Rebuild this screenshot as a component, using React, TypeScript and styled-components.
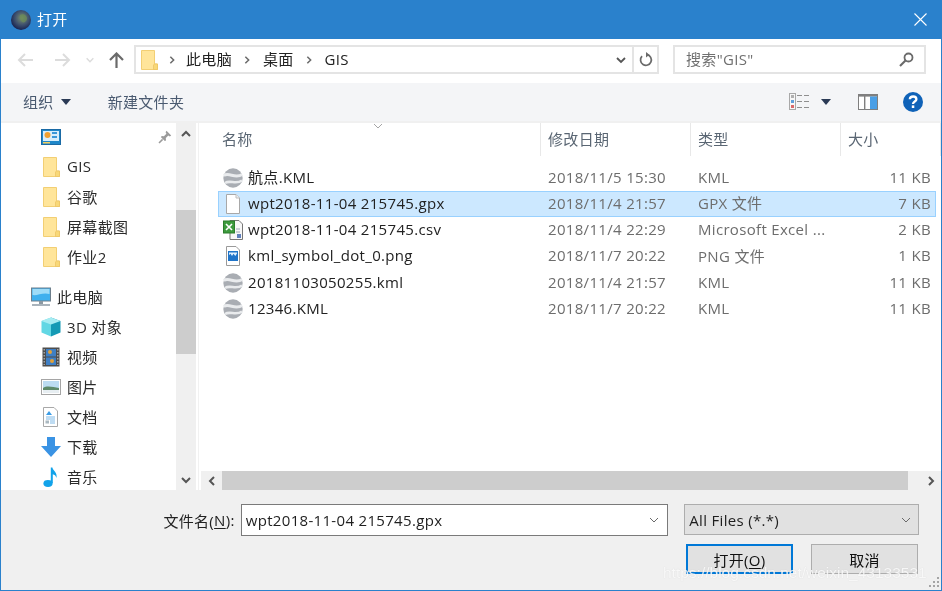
import { ReactNode } from "react";
import styled, { createGlobalStyle } from "styled-components";

const GlobalStyle = createGlobalStyle`
  html, body {
    margin: 0;
    padding: 0;
    width: 942px;
    height: 591px;
    overflow: hidden;
    background: #fff;
  }
  * { box-sizing: border-box; }
`;

const Dialog = styled.div`
  position: relative;
  width: 942px;
  height: 591px;
  display: flex;
  flex-direction: column;
  background: #fff;
  border: 1px solid #2a81cc;
  border-top: 0;
  font-family: "Open Sans", "Noto Sans CJK SC", sans-serif;
  font-size: 15px;
  letter-spacing: 0.32px;
  color: #1e1e1e;
  overflow: hidden;
  filter: blur(0.35px);
`;

const TitleBar = styled.div`
  height: 39px;
  flex: none;
  margin: 0 -1px;
  padding: 0 15px 0 11px;
  display: flex;
  align-items: center;
  background: #2a81cc;
  color: #fff;
`;

const TitleText = styled.span`
  margin: 0 0 2px 6px;
  flex: 1;
`;

const NavBar = styled.div`
  height: 44px;
  flex: none;
  padding: 6px 15px 9px 15px;
  display: flex;
  align-items: center;
`;

const NavButtons = styled.div`
  width: 118px;
  height: 100%;
  display: flex;
  align-items: center;
`;

const NavSlot = styled.span<{ $w: number }>`
  width: ${(p) => p.$w}px;
  display: flex;
  justify-content: center;
`;

const AddressBox = styled.div`
  width: 525px;
  height: 29px;
  display: flex;
  align-items: center;
  border: 2px solid #e4e4e4;
  padding-left: 4px;
`;

const Crumb = styled.span`
  color: #222;
  white-space: nowrap;
  margin-bottom: 2px;
`;

const CrumbSep = styled.span<{ $w?: number }>`
  width: ${(p) => p.$w ?? 31}px;
  display: flex;
  justify-content: center;
`;

const AddressEnd = styled.div`
  margin-left: auto;
  display: flex;
  align-items: center;
  height: 100%;
`;

const RefreshSlot = styled.span`
  width: 25px;
  height: 100%;
  margin-left: 5px;
  border-left: 2px solid #e4e4e4;
  display: flex;
  align-items: center;
  justify-content: center;
`;

const SearchBox = styled.div`
  width: 253px;
  height: 29px;
  margin-left: 14px;
  padding: 0 10px 0 11px;
  display: flex;
  align-items: center;
  justify-content: space-between;
  border: 2px solid #e4e4e4;
  color: #707070;
`;

const SearchHint = styled.span`
  margin-bottom: 2px;
`;

const ToolBar = styled.div`
  height: 40px;
  flex: none;
  padding: 0 18px 1px 22px;
  display: flex;
  align-items: center;
  background: #f4f5f7;
  border-bottom: 2px solid #f0f0f0;
  color: #4a5a70;
`;

const ToolButton = styled.span<{ $gap?: number; $mr?: number }>`
  display: flex;
  align-items: center;
  gap: ${(p) => p.$gap ?? 0}px;
  margin-right: ${(p) => p.$mr ?? 0}px;
`;

const ToolRight = styled.div`
  margin-left: auto;
  display: flex;
  align-items: center;
`;

const Main = styled.div`
  flex: 1;
  min-height: 0;
  display: flex;
`;

const Sidebar = styled.div`
  width: 175px;
  flex: none;
  margin-top: -1px;
  overflow: hidden;
`;

const NavRow = styled.div<{ $indent: number; $gapTop?: number }>`
  height: 30px;
  margin-top: ${(p) => p.$gapTop ?? 0}px;
  padding-left: ${(p) => p.$indent}px;
  display: flex;
  align-items: center;
  gap: 6px;
  color: #2b2b2b;
  white-space: nowrap;
`;

const NavLabel = styled.span`
  margin-bottom: 2px;
`;

const PinSlot = styled.span`
  margin-left: auto;
  margin-right: 4px;
  display: flex;
`;

const VScroll = styled.div`
  width: 20px;
  flex: none;
  display: flex;
  flex-direction: column;
  background: #f0f0f0;
`;

const ScrollCap = styled.div<{ $size: number }>`
  height: ${(p) => p.$size}px;
  flex: none;
  display: flex;
  align-items: center;
  justify-content: center;
`;

const VThumb = styled.div`
  height: 144px;
  flex: none;
  background: #cdcdcd;
`;

const VSpace = styled.div`
  flex: 1;
`;

const Splitter = styled.div`
  width: 5px;
  flex: none;
  display: flex;
  justify-content: center;
  &::after {
    content: "";
    width: 1px;
    background: #f1f1f1;
  }
`;

const ListPane = styled.div`
  flex: 1;
  min-width: 0;
  display: flex;
  flex-direction: column;
  position: relative;
`;

const HeaderRow = styled.div`
  height: 33px;
  flex: none;
  display: grid;
  grid-template-columns: 340px 150px 150px 1fr;
  color: #5a6673;
`;

const HeaderCell = styled.div<{ $first?: boolean }>`
  display: flex;
  align-items: center;
  padding: 0 0 2px ${(p) => (p.$first ? 21 : 7)}px;
  border-right: 1px solid #e8e8e8;
`;

const SortMark = styled.span`
  position: absolute;
  left: 171px;
  top: -3px;
  display: flex;
`;

const Rows = styled.div`
  flex: 1;
  min-height: 0;
  padding: 8.5px 5px 0 17px;
`;

const Row = styled.div<{ $selected?: boolean }>`
  height: 26.25px;
  display: grid;
  grid-template-columns: 325px 150px 140px 1fr;
  align-items: center;
  padding: 0 4px;
  border: 1px solid ${(p) => (p.$selected ? "#99d1ff" : "transparent")};
  background: ${(p) => (p.$selected ? "#cce8ff" : "transparent")};
`;

const NameCell = styled.div`
  display: flex;
  align-items: center;
  gap: 5px;
  color: #222;
  white-space: nowrap;
`;

const FileName = styled.span`
  margin-bottom: 2px;
`;

const DimCell = styled.div<{ $right?: boolean }>`
  color: #6d6d6d;
  white-space: nowrap;
  margin-bottom: 2px;
  text-align: ${(p) => (p.$right ? "right" : "left")};
`;

const HScroll = styled.div`
  height: 19px;
  flex: none;
  display: flex;
  background: #f0f0f0;
`;

const HCap = styled.div`
  width: 21px;
  flex: none;
  display: flex;
  align-items: center;
  justify-content: center;
`;

const HThumb = styled.div`
  width: 686px;
  flex: none;
  background: #cdcdcd;
`;

const Footer = styled.div`
  height: 100px;
  flex: none;
  padding: 14px 22px 0 0;
  display: flex;
  flex-direction: column;
  background: #f0f0f0;
`;

const FileRow = styled.div`
  display: flex;
  align-items: flex-start;
`;

const FileLabel = styled.label`
  width: 240px;
  height: 32px;
  padding-right: 6px;
  display: flex;
  align-items: center;
  justify-content: flex-end;
  color: #222;
`;

const Underline = styled.span`
  text-decoration: underline;
  text-underline-offset: 2px;
`;

const FileInput = styled.div`
  width: 428px;
  height: 32px;
  padding: 0 7px 0 4px;
  display: flex;
  align-items: center;
  justify-content: space-between;
  background: #fff;
  border: 1px solid #7a7a7a;
`;

const TypeSelect = styled.div`
  width: 235px;
  height: 31px;
  margin-left: 16px;
  padding: 0 6px 0 4px;
  display: flex;
  align-items: center;
  justify-content: space-between;
  background: #e1e1e1;
  border: 1px solid #adadad;
`;

const ButtonRow = styled.div`
  margin-top: 8px;
  display: flex;
  justify-content: flex-end;
  gap: 18px;
  padding-right: 1px;
`;

const DialogButton = styled.button<{ $primary?: boolean }>`
  width: 107px;
  height: 30px;
  padding: 0;
  font: inherit;
  letter-spacing: inherit;
  color: #111;
  background: #e1e1e1;
  border: ${(p) => (p.$primary ? "2px solid #0078d7" : "1px solid #adadad")};
`;

const Watermark = styled.span`
  position: absolute;
  left: 662px;
  top: 564px;
  font-family: "Liberation Sans", sans-serif;
  font-size: 15.5px;
  letter-spacing: 0;
  color: rgba(255, 255, 255, 0.82);
  text-shadow: 0 0 1px rgba(170, 170, 170, 0.4);
  white-space: nowrap;
`;

const Grip = styled.svg`
  position: absolute;
  right: 1px;
  bottom: 1px;
`;

const Chevron = ({ dir, color = "#6a6a6a", size = 12, w = 1.8 }: { dir: "up" | "down" | "left" | "right"; color?: string; size?: number; w?: number }) => {
  const d = {
    up: "M2 8 L6 4 L10 8",
    down: "M2 4 L6 8 L10 4",
    left: "M8 2 L4 6 L8 10",
    right: "M4 2 L8 6 L4 10",
  }[dir];
  return (
    <svg width={size} height={size} viewBox="0 0 12 12" fill="none">
      <path d={d} stroke={color} strokeWidth={w} />
    </svg>
  );
};

const Caret = ({ color = "#2a3a55" }: { color?: string }) => (
  <svg width="10" height="6" viewBox="0 0 10 6">
    <path d="M0 0 H10 L5 6 Z" fill={color} />
  </svg>
);

const HArrow = ({ flip, color }: { flip?: boolean; color: string }) => (
  <svg width="17" height="14" viewBox="0 0 17 14" fill="none" style={flip ? { transform: "scaleX(-1)" } : undefined}>
    <path d="M16 7 H2 M8 1 L2 7 L8 13" stroke={color} strokeWidth="2" />
  </svg>
);

const FolderIcon = ({ small }: { small?: boolean }) => (
  <svg width={small ? 18 : 20} height="20" viewBox="0 0 18 20">
    <path d="M1.5 0.5 H14.5 V14 H17.5 V19.5 H1.5 Z" fill="#ffe59a" stroke="#f2cf74" />
    <path d="M14.5 14 L13.5 15 V19.5 H17.5 V14 Z" fill="#f8d878" stroke="#eec565" strokeWidth="0.8" />
  </svg>
);

const GlobeIcon = () => (
  <svg width="20" height="20" viewBox="0 0 20 20">
    <defs>
      <radialGradient id="globeShade" cx="0.55" cy="0.4" r="0.65">
        <stop offset="0" stopColor="#7d9270" />
        <stop offset="0.55" stopColor="#3d4f6d" />
        <stop offset="1" stopColor="#101a4a" />
      </radialGradient>
    </defs>
    <circle cx="10" cy="10" r="10" fill="url(#globeShade)" />
    <path d="M9 5 C12 3 16 5 16 9 C15 12 13 13 11 12 C9 10 8 7 9 5 Z" fill="#6c8c56" opacity="0.75" />
  </svg>
);

const KmlIcon = () => (
  <svg width="20" height="20" viewBox="0 0 20 20">
    <circle cx="10" cy="10" r="9.7" fill="#a9adb3" />
    <path d="M0.8 7.5 C6 4 12 11 19.2 6.5" fill="none" stroke="#e9ebed" strokeWidth="3" />
    <path d="M2 15 C7 11.5 13 17 19 12.5" fill="none" stroke="#e9ebed" strokeWidth="2.6" />
  </svg>
);

const BlankFileIcon = () => (
  <svg width="20" height="20" viewBox="0 0 20 20">
    <path d="M3.5 0.5 H13 L16.5 4 V19.5 H3.5 Z" fill="#fff" stroke="#a8a8a8" />
    <path d="M13 0.5 V4 H16.5" fill="#f0f0f0" stroke="#bdbdbd" />
  </svg>
);

const CsvIcon = () => (
  <svg width="20" height="20" viewBox="0 0 20 20">
    <path d="M7 0.5 H16 L19.5 4 V19.5 H7 Z" fill="#f7f7f7" stroke="#777" />
    <path d="M13 9 H17 M13 12 H17" stroke="#a0a8b5" strokeWidth="1" />
    <rect x="14" y="14" width="4" height="4" fill="#5f7fbc" />
    <rect x="0.5" y="1" width="11" height="12" fill="#3d9a3d" stroke="#2b7d2b" />
    <path d="M3 4 L9 10 M9 4 L3 10" stroke="#fff" strokeWidth="1.6" />
  </svg>
);

const PngIcon = () => (
  <svg width="20" height="20" viewBox="0 0 20 20">
    <path d="M3.5 0.5 H13 L16.5 4 V19.5 H3.5 Z" fill="#fff" stroke="#9a9a9a" />
    <rect x="5" y="5" width="10" height="10" fill="#1f74c9" />
    <path d="M6 6.5 H14 V7.5 L12.3 10 L10.5 7.8 L9 10 L7.5 7.8 L6 9 Z" fill="#dff0ff" />
  </svg>
);

const PanelIcon = () => (
  <svg width="20" height="16" viewBox="0 0 20 16">
    <rect x="0.5" y="0.5" width="19" height="15" fill="#1f87c9" stroke="#1a6aa5" />
    <rect x="2" y="2" width="16" height="10" fill="#d8eefb" />
    <circle cx="6.5" cy="6" r="3" fill="#f0a030" />
    <rect x="11" y="3" width="5" height="2" fill="#3b98d8" />
    <rect x="11" y="7" width="5" height="2" fill="#3b98d8" />
    <rect x="2" y="13" width="7" height="1.5" fill="#f5d060" />
  </svg>
);

const PinIcon = () => (
  <svg width="14" height="14" viewBox="0 0 14 14">
    <path d="M8.5 0.8 L13.2 5.5 L11.8 6.4 L10.3 5.6 L7.8 8.1 L8 10.4 L6.8 11 L3 7.2 L3.6 6 L5.9 6.2 L8.4 3.7 L7.6 2.2 Z" fill="#9b9b9b" />
    <path d="M4.6 9.4 L1 13" stroke="#9b9b9b" strokeWidth="1.5" />
  </svg>
);

const MonitorIcon = () => (
  <svg width="20" height="20" viewBox="0 0 20 20">
    <rect x="0.5" y="1" width="19" height="13" fill="#3fb0ee" stroke="#6d7f8c" />
    <path d="M1.5 2 H18.5 V7 C12 5 6 9 1.5 8 Z" fill="#9edcf8" />
    <rect x="8" y="14" width="4" height="3" fill="#8c99a3" />
    <rect x="1" y="17" width="18" height="2" fill="#a9b3bb" />
  </svg>
);

const CubeIcon = () => (
  <svg width="20" height="20" viewBox="0 0 20 20">
    <path d="M10 0.5 L19.5 4 V15.5 L10 19.5 Z" fill="#149ab5" />
    <path d="M10 0.5 L0.5 4 V15.5 L10 19.5 Z" fill="#62d7e4" />
    <path d="M10 0.5 L19.5 4 L10 7.5 L0.5 4 Z" fill="#a6ecf2" />
  </svg>
);

const FilmIcon = () => (
  <svg width="20" height="20" viewBox="0 0 20 20">
    <rect x="1.5" y="0.5" width="17" height="19" fill="#4d4d4d" />
    <rect x="5" y="2" width="10" height="7.5" fill="#3f7fc4" />
    <rect x="5" y="10.5" width="10" height="7.5" fill="#3f7fc4" />
    <circle cx="9" cy="5" r="2" fill="#e1a13a" />
    <circle cx="11" cy="14" r="2" fill="#e1a13a" />
    <path d="M3.2 2 V18 M16.8 2 V18" stroke="#bbb" strokeWidth="1.2" strokeDasharray="1.5 1.5" />
  </svg>
);

const PictureIcon = () => (
  <svg width="20" height="16" viewBox="0 0 20 16">
    <rect x="0.5" y="0.5" width="19" height="15" fill="#fff" stroke="#a5a5a5" />
    <rect x="2" y="2" width="16" height="12" fill="#bcdcf2" />
    <path d="M2 9 C6 6 12 8 18 9 V11 H2 Z" fill="#5e8a6a" />
    <rect x="2" y="11" width="16" height="3" fill="#e7eef2" />
  </svg>
);

const DocIcon = () => (
  <svg width="20" height="20" viewBox="0 0 20 20">
    <path d="M2.5 0.5 H13 L16.5 4 V19.5 H2.5 Z" fill="#fff" stroke="#a8a8a8" />
    <path d="M8 4 L5 8 H11 Z" fill="#3b9de6" />
    <path d="M5 10 H14 M5 12 H14 M9 14 H14 M9 16 H14" stroke="#7fb9e6" strokeWidth="1" />
    <rect x="4.5" y="13.5" width="3.5" height="3" fill="#aab8c0" />
  </svg>
);

const DownloadIcon = () => (
  <svg width="20" height="20" viewBox="0 0 20 20">
    <path d="M6 0 H14 V9 H20 L10 20 L0 9 H6 Z" fill="#3a93e4" />
  </svg>
);

const MusicIcon = () => (
  <svg width="20" height="20" viewBox="0 0 20 20">
    <ellipse cx="7" cy="16.5" rx="4.6" ry="3.4" fill="#12a3ea" />
    <path d="M9.8 16 V0.5 H11.4 C12 4 16.5 5 15.5 11 C14.8 8.5 13.5 7.6 11.8 7.2 V16 Z" fill="#12a3ea" />
  </svg>
);

const ViewIcon = () => (
  <svg width="21" height="17" viewBox="0 0 21 17">
    <rect x="0.5" y="0.5" width="6" height="16" fill="#f7f7f7" stroke="#a8a8a8" />
    <rect x="2" y="2" width="3" height="3" fill="#b0b0b0" />
    <rect x="2" y="7" width="3" height="3" fill="#5ea0dc" />
    <rect x="2" y="12" width="3" height="3" fill="#d96a6a" />
    <path d="M8 2.5 H13 M15 2.5 H20 M8 8.5 H13 M15 8.5 H20 M8 14.5 H13 M15 14.5 H20" stroke="#8f8f8f" strokeWidth="1.2" />
  </svg>
);

const PaneIcon = () => (
  <svg width="20" height="16" viewBox="0 0 20 16">
    <rect x="0.5" y="0.5" width="19" height="15" fill="#fff" stroke="#7f7f7f" />
    <rect x="1" y="1" width="18" height="1.6" fill="#7f7f7f" />
    <rect x="6" y="2" width="1.4" height="13" fill="#7f7f7f" />
    <rect x="12" y="2.5" width="7" height="12.5" fill="#4a9fe6" />
  </svg>
);

const HelpIcon = () => (
  <svg width="20" height="20" viewBox="0 0 20 20">
    <circle cx="10" cy="10" r="10" fill="#0f62b8" />
    <path d="M6.8 7.2 C7 3.6 13.4 3.6 13.4 7.2 C13.4 9.6 10 9.4 10 12" fill="none" stroke="#fff" strokeWidth="2.3" />
    <rect x="8.8" y="13.4" width="2.5" height="2.6" fill="#fff" />
  </svg>
);

const RefreshIcon = () => (
  <svg width="14" height="15" viewBox="0 0 14 15" fill="none">
    <path d="M8 2.6 A5.4 5.4 0 1 1 3 4.2" stroke="#6a6a6a" strokeWidth="1.7" />
    <path d="M7 0 L10.4 2.7 L7 5.4 Z" fill="#6a6a6a" />
  </svg>
);

const SearchIcon = () => (
  <svg width="15" height="15" viewBox="0 0 15 15" fill="none">
    <circle cx="9.5" cy="5.5" r="4" stroke="#6a6a6a" strokeWidth="1.8" />
    <path d="M6.5 8.5 L1 14" stroke="#6a6a6a" strokeWidth="2.2" />
  </svg>
);

type NavItem = { icon: ReactNode; label?: string; indent: number; gapTop?: number; pin?: boolean };

const navItems: NavItem[] = [
  { icon: <PanelIcon />, indent: 40, pin: true },
  { icon: <FolderIcon />, label: "GIS", indent: 40 },
  { icon: <FolderIcon />, label: "谷歌", indent: 40 },
  { icon: <FolderIcon />, label: "屏幕截图", indent: 40 },
  { icon: <FolderIcon />, label: "作业2", indent: 40 },
  { icon: <MonitorIcon />, label: "此电脑", indent: 30, gapTop: 10 },
  { icon: <CubeIcon />, label: "3D 对象", indent: 40 },
  { icon: <FilmIcon />, label: "视频", indent: 40 },
  { icon: <PictureIcon />, label: "图片", indent: 40 },
  { icon: <DocIcon />, label: "文档", indent: 40 },
  { icon: <DownloadIcon />, label: "下载", indent: 40 },
  { icon: <MusicIcon />, label: "音乐", indent: 40 },
];

type FileItem = { icon: ReactNode; name: string; date: string; type: string; size: string; selected?: boolean };

const files: FileItem[] = [
  { icon: <KmlIcon />, name: "航点.KML", date: "2018/11/5 15:30", type: "KML", size: "11 KB" },
  { icon: <BlankFileIcon />, name: "wpt2018-11-04 215745.gpx", date: "2018/11/4 21:57", type: "GPX 文件", size: "7 KB", selected: true },
  { icon: <CsvIcon />, name: "wpt2018-11-04 215745.csv", date: "2018/11/4 22:29", type: "Microsoft Excel ...", size: "2 KB" },
  { icon: <PngIcon />, name: "kml_symbol_dot_0.png", date: "2018/11/7 20:22", type: "PNG 文件", size: "1 KB" },
  { icon: <KmlIcon />, name: "20181103050255.kml", date: "2018/11/4 21:57", type: "KML", size: "11 KB" },
  { icon: <KmlIcon />, name: "12346.KML", date: "2018/11/7 20:22", type: "KML", size: "11 KB" },
];

export default function App() {
  return (
    <>
      <GlobalStyle />
      <Dialog>
        <TitleBar>
          <GlobeIcon />
          <TitleText>打开</TitleText>
          <svg width="13" height="13" viewBox="0 0 13 13" fill="none">
            <path d="M0.5 0.5 L12.5 12.5 M12.5 0.5 L0.5 12.5" stroke="#fff" strokeWidth="1.1" />
          </svg>
        </TitleBar>

        <NavBar>
          <NavButtons>
            <NavSlot $w={18}>
              <HArrow color="#dcdcdc" />
            </NavSlot>
            <NavSlot $w={19} />
            <NavSlot $w={18}>
              <HArrow flip color="#dcdcdc" />
            </NavSlot>
            <NavSlot $w={37}>
              <Chevron dir="down" color="#dcdcdc" size={10} />
            </NavSlot>
            <NavSlot $w={16}>
              <svg width="15" height="16" viewBox="0 0 15 16" fill="none">
                <path d="M7.5 16 V2 M1 8 L7.5 1.5 L14 8" stroke="#6a6a6a" strokeWidth="2.2" />
              </svg>
            </NavSlot>
          </NavButtons>
          <AddressBox>
            <FolderIcon small />
            <CrumbSep $w={28}>
              <Chevron dir="right" size={10} />
            </CrumbSep>
            <Crumb>此电脑</Crumb>
            <CrumbSep>
              <Chevron dir="right" size={10} />
            </CrumbSep>
            <Crumb>桌面</Crumb>
            <CrumbSep>
              <Chevron dir="right" size={10} />
            </CrumbSep>
            <Crumb>GIS</Crumb>
            <AddressEnd>
              <Chevron dir="down" color="#555" />
              <RefreshSlot>
                <RefreshIcon />
              </RefreshSlot>
            </AddressEnd>
          </AddressBox>
          <SearchBox>
            <SearchHint>搜索"GIS"</SearchHint>
            <SearchIcon />
          </SearchBox>
        </NavBar>

        <ToolBar>
          <ToolButton $gap={7} $mr={37}>
            组织 <Caret />
          </ToolButton>
          <ToolButton>新建文件夹</ToolButton>
          <ToolRight>
            <ToolButton $mr={11}>
              <ViewIcon />
            </ToolButton>
            <ToolButton $mr={27}>
              <Caret />
            </ToolButton>
            <ToolButton $mr={25}>
              <PaneIcon />
            </ToolButton>
            <ToolButton>
              <HelpIcon />
            </ToolButton>
          </ToolRight>
        </ToolBar>

        <Main>
          <Sidebar>
            {navItems.map((item, i) => (
              <NavRow key={i} $indent={item.indent} $gapTop={item.gapTop}>
                {item.icon}
                {item.label && <NavLabel>{item.label}</NavLabel>}
                {item.pin && (
                  <PinSlot>
                    <PinIcon />
                  </PinSlot>
                )}
              </NavRow>
            ))}
          </Sidebar>
          <VScroll>
            <ScrollCap $size={22}>
              <Chevron dir="up" color="#555" w={2} />
            </ScrollCap>
            <ScrollCap $size={65} />
            <VThumb />
            <VSpace />
            <ScrollCap $size={21}>
              <Chevron dir="down" color="#555" w={2} />
            </ScrollCap>
          </VScroll>
          <Splitter />
          <ListPane>
            <SortMark>
              <Chevron dir="down" color="#a5a5a5" w={1} />
            </SortMark>
            <HeaderRow>
              <HeaderCell $first>名称</HeaderCell>
              <HeaderCell>修改日期</HeaderCell>
              <HeaderCell>类型</HeaderCell>
              <HeaderCell>大小</HeaderCell>
            </HeaderRow>
            <Rows>
              {files.map((f) => (
                <Row key={f.name} $selected={f.selected}>
                  <NameCell>
                    {f.icon}
                    <FileName>{f.name}</FileName>
                  </NameCell>
                  <DimCell>{f.date}</DimCell>
                  <DimCell>{f.type}</DimCell>
                  <DimCell $right>{f.size}</DimCell>
                </Row>
              ))}
            </Rows>
            <HScroll>
              <HCap>
                <Chevron dir="left" color="#555" w={2} />
              </HCap>
              <HThumb />
              <VSpace />
              <HCap>
                <Chevron dir="right" color="#555" w={2} />
              </HCap>
            </HScroll>
          </ListPane>
        </Main>

        <Footer>
          <FileRow>
            <FileLabel>
              文件名(<Underline>N</Underline>):
            </FileLabel>
            <FileInput>
              wpt2018-11-04 215745.gpx
              <Chevron dir="down" color="#6a6a6a" w={1} />
            </FileInput>
            <TypeSelect>
              All Files (*.*)
              <Chevron dir="down" color="#6a6a6a" w={1} />
            </TypeSelect>
          </FileRow>
          <ButtonRow>
            <DialogButton $primary>
              打开(<Underline>O</Underline>)
            </DialogButton>
            <DialogButton>取消</DialogButton>
          </ButtonRow>
        </Footer>

        <Watermark>https://blog.csdn.net/weixin_43133531</Watermark>
        <Grip width="12" height="12" viewBox="0 0 12 12" fill="#a5a5a5">
          <rect x="9" y="0" width="2" height="2" />
          <rect x="5" y="4" width="2" height="2" />
          <rect x="9" y="4" width="2" height="2" />
          <rect x="1" y="8" width="2" height="2" />
          <rect x="5" y="8" width="2" height="2" />
          <rect x="9" y="8" width="2" height="2" />
        </Grip>
      </Dialog>
    </>
  );
}
